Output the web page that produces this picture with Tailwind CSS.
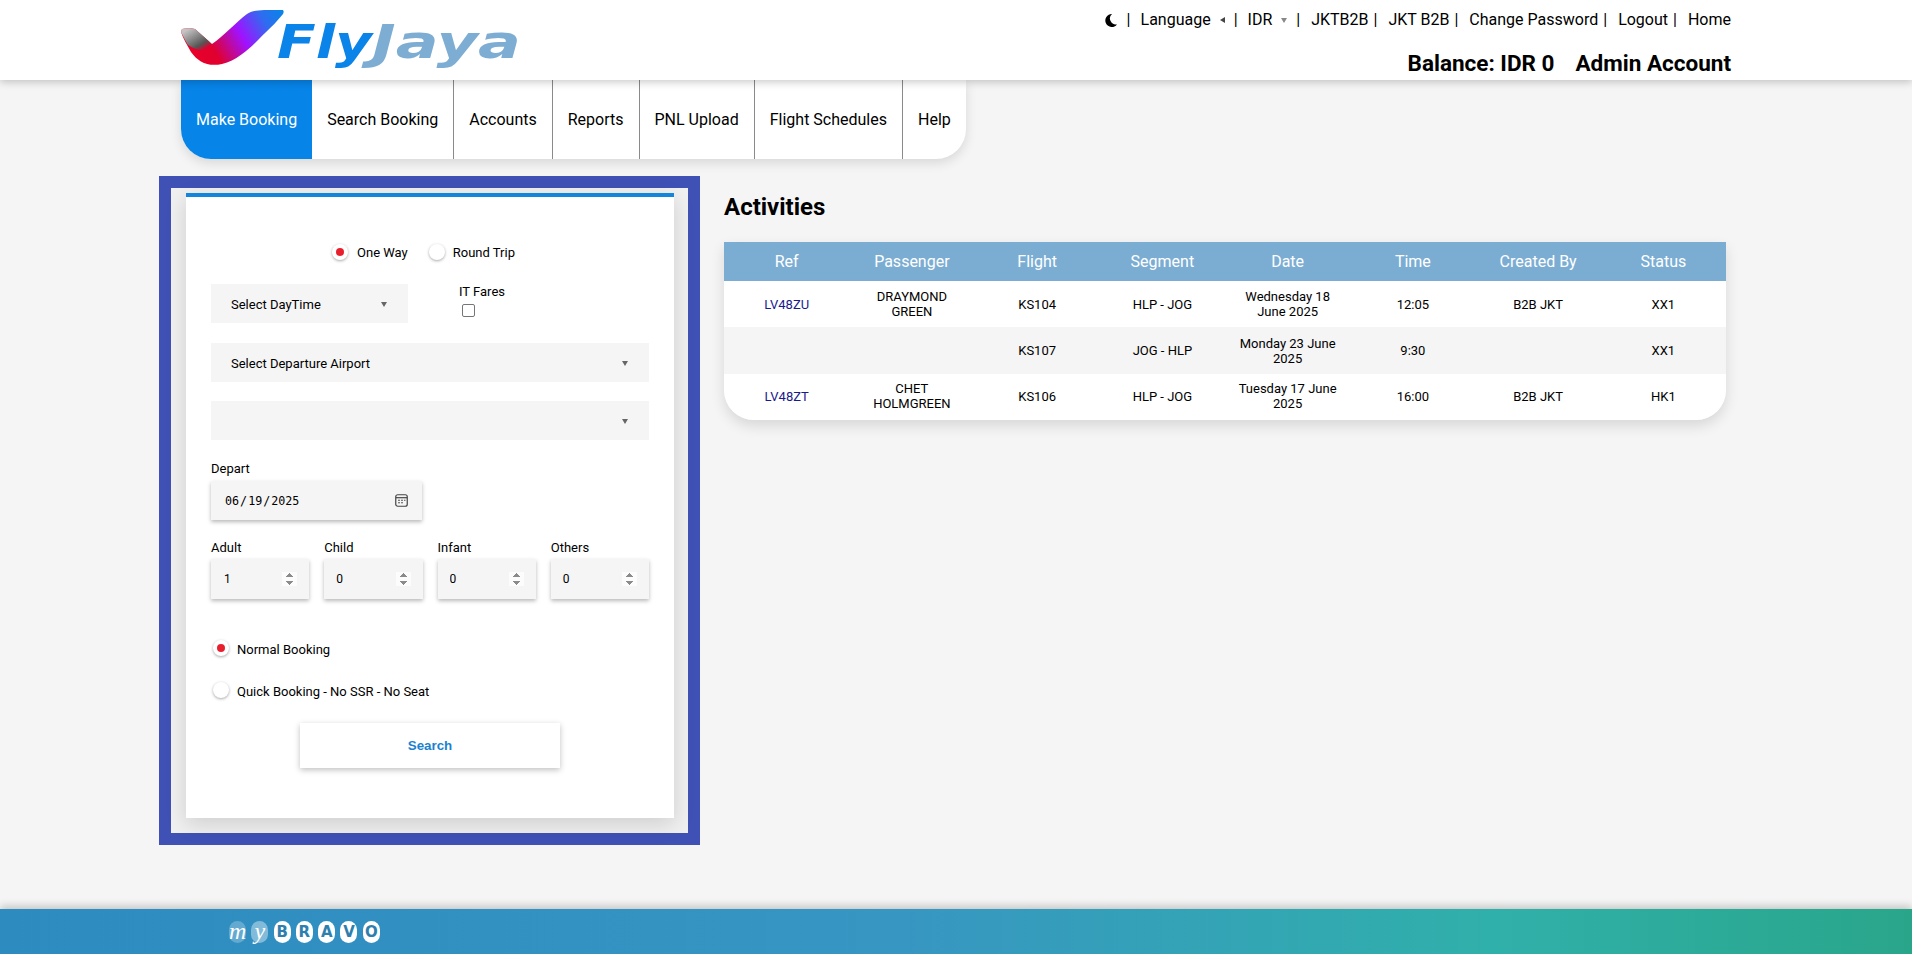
<!DOCTYPE html>
<html lang="en">
<head>
<meta charset="utf-8">
<title>FlyJaya</title>
<script src="https://cdn.jsdelivr.net/npm/@tailwindcss/browser@4"></script>
</head>
<body class="bg-[#f5f5f5] font-['Roboto',sans-serif] text-black overflow-hidden">
<div class="h-[954px] flex flex-col">

  <!-- header -->
  <header class="relative z-10 h-[80px] bg-white shadow-[0_2px_8px_rgba(0,0,0,0.22)] shrink-0">
    <div class="ml-[181px] w-[1550px] h-full flex justify-between">
      <svg width="345" height="80" viewBox="181 0 345 80" class="shrink-0">
        <defs>
          <linearGradient id="wing" gradientUnits="userSpaceOnUse" x1="198" y1="62" x2="282" y2="12">
            <stop offset="0" stop-color="#e8002a"/>
            <stop offset="0.2" stop-color="#e0002f"/>
            <stop offset="0.52" stop-color="#a012ff"/>
            <stop offset="0.8" stop-color="#2f6cf0"/>
            <stop offset="1" stop-color="#0a84e8"/>
          </linearGradient>
          <linearGradient id="tail" gradientUnits="userSpaceOnUse" x1="190" y1="28" x2="204" y2="50">
            <stop offset="0" stop-color="#c4c4c4"/>
            <stop offset="0.75" stop-color="#555555"/>
            <stop offset="1" stop-color="#555555" stop-opacity="0"/>
          </linearGradient>
        </defs>
        <path d="M182 29 C186 28 192 28 195 29 L212 44 C224 36 236 22 247 14 C252 10 258 10 282 10 C284 10 284 12 283 14 C275 24 268 30 260 38 C250 48 238 60 222 64 C208 67 198 62 191 52 C187 45 183 38 181 32 Z" fill="url(#wing)"/>
        <path d="M182 29 C186 28 192 28 195 29 L212 44 C208 47 206 48 203 50 C198 50 192 48 188 45 C185 40 183 36 181 32 Z" fill="url(#tail)"/>
        <text x="277" y="58" font-family="DejaVu Sans" font-weight="700" font-style="italic" font-size="46" fill="#0a84e8" textLength="95" lengthAdjust="spacingAndGlyphs">Fly</text>
        <text x="372" y="58" font-family="DejaVu Sans" font-weight="700" font-style="italic" font-size="46" fill="#7dadd3" textLength="149" lengthAdjust="spacingAndGlyphs">Jaya</text>
      </svg>
      <div class="flex flex-col items-end">
        <div class="mt-[11px] h-[18px] flex items-center text-base leading-[18px] whitespace-nowrap">
          <svg width="12" height="13" viewBox="0 0 12 13"><path d="M7 0 A6.5 6.5 0 1 0 12 10.4 A6 6 0 0 1 7 0 Z" fill="#000"/></svg>
          <span class="ml-[10px]">|</span>
          <span class="ml-[10px]">Language</span>
          <span class="ml-[9px] w-0 h-0 border-y-[3px] border-y-transparent border-r-[5px] border-r-[#444]"></span>
          <span class="ml-[9px]">|</span>
          <span class="ml-[10px]">IDR</span>
          <span class="ml-[9px] w-0 h-0 border-x-[3px] border-x-transparent border-t-[5px] border-t-[#888]"></span>
          <span class="ml-[9px]">|</span>
          <span class="ml-[11px]">JKTB2B</span>
          <span class="ml-[5px]">|</span>
          <span class="ml-[11px]">JKT B2B</span>
          <span class="ml-[5px]">|</span>
          <span class="ml-[11px]">Change Password</span>
          <span class="ml-[5px]">|</span>
          <span class="ml-[11px]">Logout</span>
          <span class="ml-[5px]">|</span>
          <span class="ml-[11px]">Home</span>
        </div>
        <div class="mt-[21px] flex gap-[21px] text-[22.5px] leading-[26px] font-bold whitespace-nowrap">
          <span>Balance: IDR 0</span>
          <span>Admin Account</span>
        </div>
      </div>
    </div>
  </header>

  <!-- nav -->
  <nav class="ml-[181px] self-start flex h-[79px] bg-white rounded-b-[30px] shadow-[0_4px_12px_rgba(0,0,0,0.12)] text-base whitespace-nowrap shrink-0">
    <a class="flex items-center px-[15px] bg-[#0784e8] text-white rounded-bl-[30px]">Make Booking</a>
    <a class="flex items-center px-[15px] border-r border-[#8a8a8a]">Search Booking</a>
    <a class="flex items-center px-[15px] border-r border-[#8a8a8a]">Accounts</a>
    <a class="flex items-center px-[15px] border-r border-[#8a8a8a]">Reports</a>
    <a class="flex items-center px-[15px] border-r border-[#8a8a8a]">PNL Upload</a>
    <a class="flex items-center px-[15px] border-r border-[#8a8a8a]">Flight Schedules</a>
    <a class="flex items-center px-[15px]">Help</a>
  </nav>

  <main class="flex-1 flex items-start ml-[159px] pt-[17px] gap-[24px]">
    <!-- booking form -->
    <section class="w-[541px] border-[12px] border-[#3f51b5] bg-[#f0f0f0] pt-[5px] pb-[15px] shrink-0">
      <div class="ml-[15px] w-[488px] bg-white border-t-4 border-[#1385dc] px-[25px] pt-[46px] pb-[50px] shadow-[0_6px_20px_rgba(0,0,0,0.14)] text-[13px] leading-[16px]">

        <div class="h-[20px] flex items-center justify-center pr-[13px]">
          <span class="-mt-[2px] w-4 h-4 rounded-full bg-white shadow-[0_1px_3px_rgba(0,0,0,0.35)] flex items-center justify-center"><span class="w-2 h-2 rounded-full bg-[#e8202e]"></span></span>
          <span class="ml-[9px]">One Way</span>
          <span class="-mt-[2px] ml-[21px] w-4 h-4 rounded-full bg-white shadow-[0_1px_3px_rgba(0,0,0,0.35)]"></span>
          <span class="ml-[8px]">Round Trip</span>
        </div>

        <div class="mt-[21px] flex">
          <div class="w-[197px] h-[39px] bg-[#f5f5f5] flex items-center justify-between pl-[20px] pr-[21px]">
            <span class="pt-[2px]">Select DayTime</span>
            <span class="mt-[1px] w-0 h-0 border-x-[3px] border-x-transparent border-t-[5px] border-t-[#666]"></span>
          </div>
          <div class="ml-[51px]">
            <div>IT Fares</div>
            <input type="checkbox" class="block mt-[4px] ml-[3px] w-[13px] h-[13px] appearance-none bg-white border border-[#767676] rounded-[2px]">
          </div>
        </div>

        <div class="mt-[20px] h-[39px] bg-[#f5f5f5] flex items-center justify-between pl-[20px] pr-[21px]">
          <span class="pt-[2px]">Select Departure Airport</span>
          <span class="mt-[1px] w-0 h-0 border-x-[3px] border-x-transparent border-t-[5px] border-t-[#666]"></span>
        </div>
        <div class="mt-[19px] h-[39px] bg-[#f5f5f5] flex items-center justify-end pr-[21px]">
          <span class="mt-[1px] w-0 h-0 border-x-[3px] border-x-transparent border-t-[5px] border-t-[#666]"></span>
        </div>

        <div class="mt-[21px]">Depart</div>
        <div class="relative mt-[4px] w-[211px]">
          <input type="date" value="2025-06-19" class="block w-full h-[39px] bg-[#f5f5f5] pl-[13px] pr-[13px] shadow-[0_2px_4px_rgba(0,0,0,0.28)] font-['DejaVu_Sans_Mono',monospace] text-[11.7px] [&::-webkit-calendar-picker-indicator]:opacity-0">
          <svg class="absolute left-[184px] top-[13px]" width="13" height="13" viewBox="0 0 13 13" fill="none">
            <rect x="0.75" y="0.75" width="11.5" height="11.5" rx="2" stroke="#444" stroke-width="1.2"/>
            <path d="M1 3.7H12" stroke="#444" stroke-width="1.2"/>
            <path d="M3 6.2H5M6 6.2H8M9 6.2H10.5M3 8.7H5M6 8.7H8" stroke="#555" stroke-width="1.1"/>
          </svg>
        </div>

        <div class="mt-[20px] grid grid-cols-4 gap-x-[15px]">
          <div>
            <div>Adult</div>
            <input type="number" value="1" class="block mt-[3px] w-full h-[40px] bg-[#f5f5f5] pl-[13px] pr-[12px] shadow-[0_2px_4px_rgba(0,0,0,0.28)] text-xs [&::-webkit-inner-spin-button]:opacity-100">
          </div>
          <div>
            <div>Child</div>
            <input type="number" value="0" class="block mt-[3px] w-full h-[40px] bg-[#f5f5f5] pl-[12px] pr-[12px] shadow-[0_2px_4px_rgba(0,0,0,0.28)] text-xs [&::-webkit-inner-spin-button]:opacity-100">
          </div>
          <div>
            <div>Infant</div>
            <input type="number" value="0" class="block mt-[3px] w-full h-[40px] bg-[#f5f5f5] pl-[12px] pr-[12px] shadow-[0_2px_4px_rgba(0,0,0,0.28)] text-xs [&::-webkit-inner-spin-button]:opacity-100">
          </div>
          <div>
            <div>Others</div>
            <input type="number" value="0" class="block mt-[3px] w-full h-[40px] bg-[#f5f5f5] pl-[12px] pr-[12px] shadow-[0_2px_4px_rgba(0,0,0,0.28)] text-xs [&::-webkit-inner-spin-button]:opacity-100">
          </div>
        </div>

        <div class="mt-[39px] h-[20px] flex items-center pl-[2px]">
          <span class="w-4 h-4 rounded-full bg-white shadow-[0_1px_3px_rgba(0,0,0,0.35)] flex items-center justify-center"><span class="w-2 h-2 rounded-full bg-[#e8202e]"></span></span>
          <span class="ml-[8px] pt-[4px]">Normal Booking</span>
        </div>
        <div class="mt-[22px] h-[20px] flex items-center pl-[2px]">
          <span class="w-4 h-4 rounded-full bg-white shadow-[0_1px_3px_rgba(0,0,0,0.35)]"></span>
          <span class="ml-[8px] pt-[4px]">Quick Booking - No SSR - No Seat</span>
        </div>

        <button class="block mt-[23px] mx-auto w-[260px] h-[45px] bg-white shadow-[0_2px_6px_rgba(0,0,0,0.25)] text-[#1a82cf] font-bold font-['Liberation_Sans',sans-serif] text-[13.33px]">Search</button>
      </div>
    </section>

    <!-- activities -->
    <section class="w-[1002px] shrink-0 pt-[17px]">
      <h2 class="h-[49px] text-2xl font-bold leading-[28px]">Activities</h2>
      <div class="rounded-b-[30px] overflow-hidden shadow-[0_6px_14px_rgba(0,0,0,0.12)]">
        <table class="w-full table-fixed text-center text-[13px] leading-[15px]">
          <thead class="bg-[#7badd3] text-white text-base">
            <tr class="h-[39px]">
              <th class="font-normal">Ref</th>
              <th class="font-normal">Passenger</th>
              <th class="font-normal">Flight</th>
              <th class="font-normal">Segment</th>
              <th class="font-normal">Date</th>
              <th class="font-normal">Time</th>
              <th class="font-normal">Created By</th>
              <th class="font-normal">Status</th>
            </tr>
          </thead>
          <tbody>
            <tr class="h-[46px] bg-white">
              <td class="px-[10px] text-[#1a1a8c]">LV48ZU</td>
              <td class="px-[15px]">DRAYMOND GREEN</td>
              <td class="px-[10px]">KS104</td>
              <td class="px-[10px]">HLP - JOG</td>
              <td class="px-[10px]">Wednesday 18 June 2025</td>
              <td class="px-[10px]">12:05</td>
              <td class="px-[10px]">B2B JKT</td>
              <td class="px-[10px]">XX1</td>
            </tr>
            <tr class="h-[47px] bg-[#f5f5f5]">
              <td class="px-[10px]"></td>
              <td class="px-[15px]"></td>
              <td class="px-[10px]">KS107</td>
              <td class="px-[10px]">JOG - HLP</td>
              <td class="px-[10px]">Monday 23 June 2025</td>
              <td class="px-[10px]">9:30</td>
              <td class="px-[10px]"></td>
              <td class="px-[10px]">XX1</td>
            </tr>
            <tr class="h-[46px] bg-white">
              <td class="px-[10px] pb-[2px] text-[#1a1a8c]">LV48ZT</td>
              <td class="px-[15px] pb-[2px]">CHET HOLMGREEN</td>
              <td class="px-[10px] pb-[2px]">KS106</td>
              <td class="px-[10px] pb-[2px]">HLP - JOG</td>
              <td class="px-[10px] pb-[2px]">Tuesday 17 June 2025</td>
              <td class="px-[10px] pb-[2px]">16:00</td>
              <td class="px-[10px] pb-[2px]">B2B JKT</td>
              <td class="px-[10px] pb-[2px]">HK1</td>
            </tr>
          </tbody>
        </table>
      </div>
    </section>
  </main>

  <!-- footer -->
  <footer class="h-[45px] shrink-0 bg-[linear-gradient(90deg,#2d8bc0_0%,#3796c2_47%,#30b0aa_78%,#29a68a_100%)] shadow-[0_-3px_8px_rgba(0,0,0,0.2)] flex items-center pl-[229px]">
    <div class="flex gap-[5.3px]">
      <span class="w-[17px] h-[22px] rounded-[9px] bg-white/25 text-white text-center text-[24px] leading-[20px] italic font-['Liberation_Serif',serif]">m</span>
      <span class="w-[17px] h-[22px] rounded-[9px] bg-white/40 text-white text-center text-[24px] leading-[20px] italic font-['Liberation_Serif',serif]">y</span>
      <span class="w-[17px] h-[22px] rounded-[9px] bg-white text-[#2f7fae] text-center text-[15px] leading-[22px] font-bold font-['DejaVu_Sans',sans-serif]">B</span>
      <span class="w-[17px] h-[22px] rounded-[9px] bg-white text-[#2f7fae] text-center text-[15px] leading-[22px] font-bold font-['DejaVu_Sans',sans-serif]">R</span>
      <span class="w-[17px] h-[22px] rounded-[9px] bg-white text-[#2f7fae] text-center text-[15px] leading-[22px] font-bold font-['DejaVu_Sans',sans-serif]">A</span>
      <span class="w-[17px] h-[22px] rounded-[9px] bg-white text-[#2f7fae] text-center text-[15px] leading-[22px] font-bold font-['DejaVu_Sans',sans-serif]">V</span>
      <span class="w-[17px] h-[22px] rounded-[9px] bg-white text-[#2f7fae] text-center text-[15px] leading-[22px] font-bold font-['DejaVu_Sans',sans-serif]">O</span>
    </div>
  </footer>
</div>
</body>
</html>
